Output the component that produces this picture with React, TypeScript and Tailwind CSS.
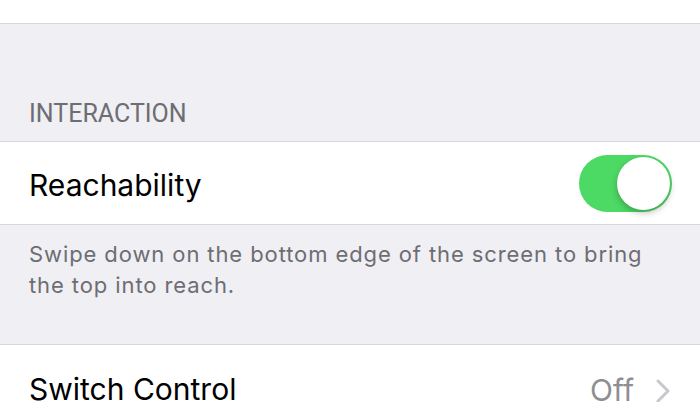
import React from "react";

export default function App() {
  return (
    <div
      className="w-[700px] h-[402px] overflow-hidden bg-[#efeff4] flex flex-col"
      style={{ fontFamily: "Inter, 'Noto Sans', sans-serif" }}
    >
      <div className="h-[24px] bg-white border-b border-[#d8d8dc] shrink-0" />
      <div className="h-[117px] shrink-0 flex items-end px-[29px] pb-[15px]">
        <span
          className="text-[25px] leading-none text-[#6d6d72]"
          style={{ fontFamily: "Roboto, Inter, sans-serif" }}
        >
          INTERACTION
        </span>
      </div>
      <div className="h-[84px] shrink-0 bg-white border-y border-[#d8d8dc] flex items-center justify-between pl-[29px] pr-[28px]">
        <span className="text-[30px] text-black pt-[4px]">Reachability</span>
        <div className="relative w-[93px] h-[57px] rounded-full bg-[#4cd964]">
          <div className="absolute right-[2px] top-[2px] w-[53px] h-[53px] rounded-full bg-white shadow-[0_3px_6px_rgba(0,0,0,0.25)]" />
        </div>
      </div>
      <div className="h-[119px] shrink-0 pl-[29px] pr-[40px] pt-[14px]">
        <p className="text-[22px] leading-[31px] tracking-[0.9px] text-[#6d6d72]">
          Swipe down on the bottom edge of the screen to bring the top into reach.
        </p>
      </div>
      <div className="flex-1 bg-white border-t border-[#d8d8dc] flex items-start justify-between pl-[29px] pr-[30px] pt-[22px]">
        <span className="text-[30px] text-black">Switch Control</span>
        <div className="flex items-center gap-[22px] pt-[1px]">
          <span className="text-[30px] text-[#8e8e93]">Off</span>
          <svg width="14" height="24" viewBox="0 0 14 24" fill="none">
            <path d="M2 2l10 10L2 22" stroke="#c7c7cc" strokeWidth="3" strokeLinecap="round" strokeLinejoin="round" />
          </svg>
        </div>
      </div>
    </div>
  );
}
